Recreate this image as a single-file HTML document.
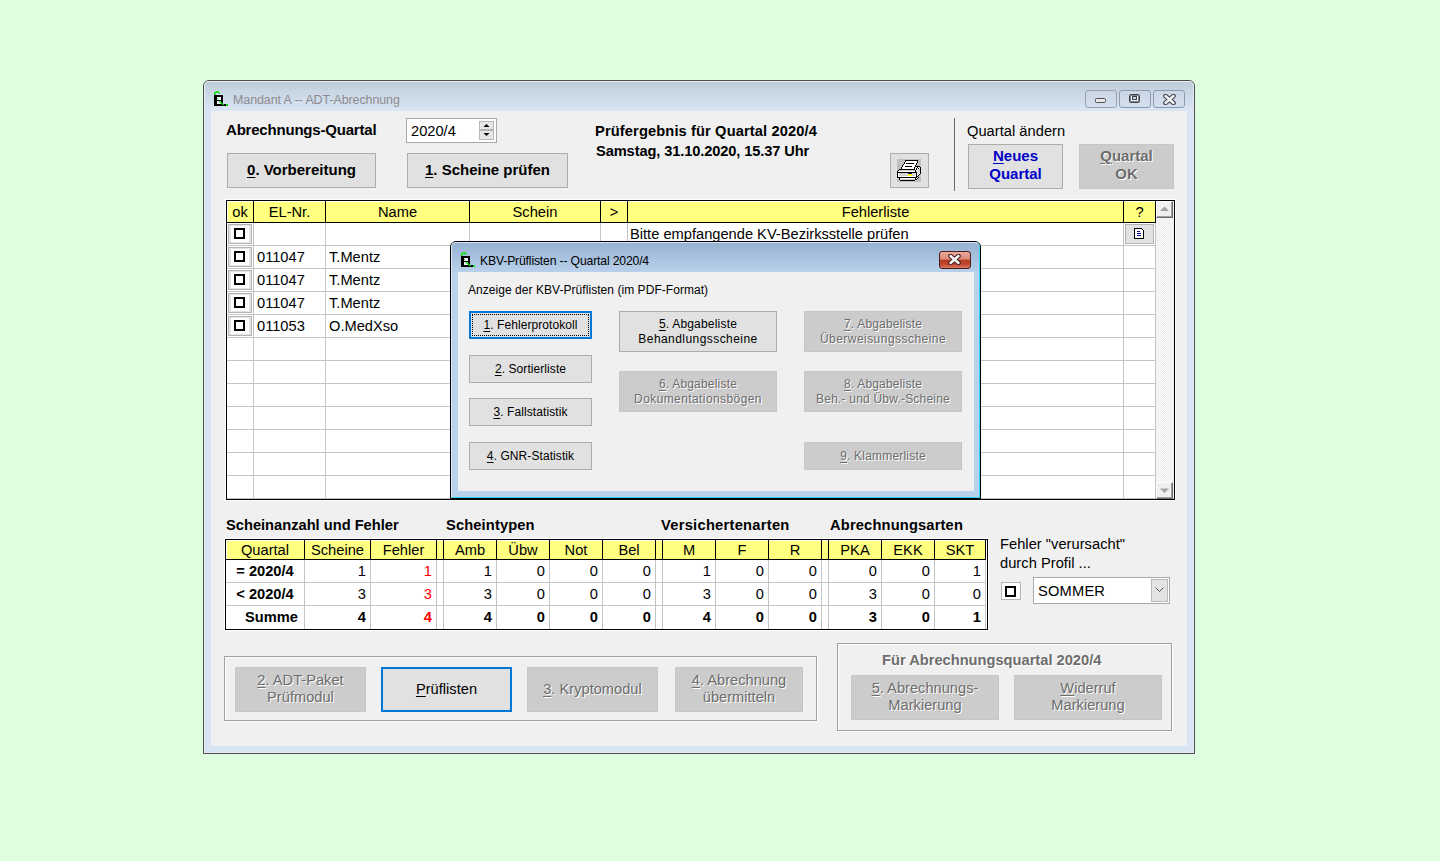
<!DOCTYPE html>
<html><head><meta charset="utf-8"><style>
*{box-sizing:border-box;margin:0;padding:0}
html,body{width:1440px;height:861px;overflow:hidden;background:#e0ffe0;font-family:"Liberation Sans",sans-serif;color:#000}
.a{position:absolute}
.t{position:absolute;white-space:nowrap;font-size:14.67px;line-height:17px}
.b{font-weight:bold}
.btn{position:absolute;background:#e1e1e1;border:1px solid #adadad;display:flex;align-items:center;justify-content:center;text-align:center;white-space:nowrap;font-size:14.67px;line-height:17px}
.dis{background:#cccccc;border-color:#c6c6c6;color:#6d6d6d;text-shadow:1px 1px 0 #fff}
.foc{border:2px solid #0078d7}
u{text-decoration:underline;text-underline-offset:2px;text-decoration-thickness:1px}
.tb{position:absolute;top:90px;width:32px;height:18px;border:1px solid #8c9bb3;border-radius:3px;background:linear-gradient(#cbd7e4,#d3dfec)}
.cb{position:absolute;width:24px;height:20px;border:1px solid #b4b4b4;background:#e3e3e3}
.cb i{position:absolute;left:2px;top:1px;width:18px;height:16px;background:#fff}
.cb b{position:absolute;left:5px;top:3px;width:11px;height:11px;border:2px solid #000}
.d{font-size:12px;line-height:15px;letter-spacing:0.2px}
.gy{background:#ffff80}
</style></head><body>
<div class="a" style="left:203px;top:80px;width:992px;height:674px;border:1px solid #4d4d4d;border-radius:6px 6px 0 0;background:#d7e4f2"></div>
<div class="a" style="left:204px;top:81px;width:990px;height:672px;border:1px solid #e6edf5;border-radius:5px 5px 0 0"></div>
<div class="a" style="left:205px;top:82px;width:988px;height:29px;border-radius:4px 4px 0 0;background:linear-gradient(#bfcddb,#dae6f3)"></div>
<div class="a" style="left:211px;top:111px;width:976px;height:635px;background:#f0f0f0;"></div>
<svg class="a" style="left:214px;top:91px" width="15" height="16" viewBox="0 0 15 16" shape-rendering="crispEdges">
  <rect x="0" y="4" width="9" height="11" fill="#000"/>
  <rect x="3" y="6" width="4" height="3" fill="#eef2f8"/>
  <rect x="3" y="10" width="4" height="3" fill="#eef2f8"/>
  <rect x="0" y="13" width="14" height="2" fill="#000"/>
  <path d="M0.8 4 V2.2 Q2 0.5 4 1 L5.5 2.5" stroke="#10e010" stroke-width="1.6" fill="none" shape-rendering="auto"/>
  <rect x="3" y="7" width="1" height="1" fill="#10e010"/>
  <path d="M5 10 L9.5 14" stroke="#10e010" stroke-width="1.3" shape-rendering="auto"/>
  <rect x="12" y="13" width="2" height="2" fill="#10e010"/>
</svg>
<div class="t " style="left:233px;top:93px;font-size:12.45px;letter-spacing:-0.07px;line-height:15px;color:#8d8a8f">Mandant A -- ADT-Abrechnung</div>
<div class="tb" style="left:1085px;border-color:#9aa1aa"><div class="a" style="left:9px;top:7px;width:11px;height:5px;border:1px solid #505050;border-radius:1.5px;background:#e8e8e8"></div></div>
<div class="tb" style="left:1119px"><div class="a" style="left:9px;top:3px;width:11px;height:9px;border:1px solid #3f4450;border-radius:1.5px;background:#f4f4f4;box-shadow:inset 0 0 0 1px #7d828c"></div><div class="a" style="left:12px;top:5px;width:5px;height:4px;border:1px solid #3f4450;background:#c9d3e0"></div></div>
<div class="tb" style="left:1153px"><svg class="a" style="left:9px;top:3px" width="13" height="11" viewBox="0 0 13 11"><path d="M2.5 2 L10.5 9 M10.5 2 L2.5 9" stroke="#3e4350" stroke-width="4.6" stroke-linecap="round"/><path d="M2.5 2 L10.5 9 M10.5 2 L2.5 9" stroke="#f4f4f4" stroke-width="2.4" stroke-linecap="round"/></svg></div>
<div class="t b" style="left:226px;top:121px;font-size:15px;letter-spacing:-0.2px">Abrechnungs-Quartal</div>
<div class="a" style="left:406px;top:118px;width:91px;height:25px;border:1px solid #a9a9a9;background:#fff"></div>
<div class="t " style="left:411px;top:123px;">2020/4</div>
<div class="a" style="left:479px;top:121px;width:15px;height:19px;border:1px solid #b9b9b9;background:#e6e6e6"></div>
<div class="a" style="left:479px;top:129px;width:15px;height:2px;background:#b4b4b4;"></div>
<svg class="a" style="left:482px;top:122px" width="10" height="16"><path d="M1.5 5 L4.5 2 L7.5 5Z" fill="#000"/><path d="M1.5 11 L4.5 14 L7.5 11Z" fill="#000"/></svg>
<div class="btn b" style="left:227px;top:153px;width:149px;height:35px;font-size:15px;letter-spacing:0px;padding-bottom:2px"><span><u>0</u>. Vorbereitung</span></div>
<div class="btn b" style="left:407px;top:153px;width:161px;height:35px;font-size:15px;letter-spacing:0px;padding-bottom:2px"><span><u>1</u>. Scheine prüfen</span></div>
<div class="t b" style="left:595px;top:123px;letter-spacing:0.12px">Prüfergebnis für Quartal 2020/4</div>
<div class="t b" style="left:596px;top:143px;letter-spacing:-0.12px">Samstag, 31.10.2020, 15.37 Uhr</div>
<div class="btn " style="left:890px;top:153px;width:39px;height:35px;"><span></span></div>
<svg class="a" style="left:897px;top:159px" width="24" height="23" viewBox="0 0 24 23" shape-rendering="crispEdges"><rect width="24" height="23" fill="#c0c0c0"/><rect x="8" y="1" width="13" height="1" fill="#000"/><rect x="8" y="2" width="1" height="1" fill="#000"/><rect x="9" y="2" width="11" height="1" fill="#fff"/><rect x="20" y="2" width="1" height="1" fill="#000"/><rect x="7" y="3" width="1" height="1" fill="#000"/><rect x="8" y="3" width="12" height="1" fill="#fff"/><rect x="20" y="3" width="1" height="1" fill="#000"/><rect x="7" y="4" width="1" height="1" fill="#000"/><rect x="8" y="4" width="1" height="1" fill="#fff"/><rect x="9" y="4" width="8" height="1" fill="#000"/><rect x="17" y="4" width="2" height="1" fill="#fff"/><rect x="19" y="4" width="1" height="1" fill="#000"/><rect x="6" y="5" width="1" height="1" fill="#000"/><rect x="7" y="5" width="12" height="1" fill="#fff"/><rect x="19" y="5" width="1" height="1" fill="#000"/><rect x="5" y="6" width="1" height="1" fill="#000"/><rect x="6" y="6" width="12" height="1" fill="#fff"/><rect x="18" y="6" width="1" height="1" fill="#000"/><rect x="5" y="7" width="1" height="1" fill="#000"/><rect x="6" y="7" width="2" height="1" fill="#fff"/><rect x="8" y="7" width="7" height="1" fill="#000"/><rect x="15" y="7" width="3" height="1" fill="#fff"/><rect x="18" y="7" width="5" height="1" fill="#000"/><rect x="4" y="8" width="1" height="1" fill="#000"/><rect x="5" y="8" width="12" height="1" fill="#fff"/><rect x="17" y="8" width="1" height="1" fill="#000"/><rect x="18" y="8" width="1" height="1" fill="#d4d4d4"/><rect x="19" y="8" width="1" height="1" fill="#fff"/><rect x="20" y="8" width="1" height="1" fill="#000"/><rect x="21" y="8" width="1" height="1" fill="#fff"/><rect x="22" y="8" width="1" height="1" fill="#d4d4d4"/><rect x="23" y="8" width="1" height="1" fill="#000"/><rect x="4" y="9" width="1" height="1" fill="#000"/><rect x="5" y="9" width="12" height="1" fill="#fff"/><rect x="17" y="9" width="1" height="1" fill="#000"/><rect x="18" y="9" width="1" height="1" fill="#fff"/><rect x="19" y="9" width="1" height="1" fill="#000"/><rect x="20" y="9" width="1" height="1" fill="#fff"/><rect x="21" y="9" width="1" height="1" fill="#000"/><rect x="22" y="9" width="1" height="1" fill="#fff"/><rect x="23" y="9" width="1" height="1" fill="#000"/><rect x="2" y="10" width="16" height="1" fill="#000"/><rect x="18" y="10" width="1" height="1" fill="#fff"/><rect x="19" y="10" width="1" height="1" fill="#000"/><rect x="20" y="10" width="1" height="1" fill="#fff"/><rect x="21" y="10" width="2" height="1" fill="#d4d4d4"/><rect x="23" y="10" width="1" height="1" fill="#000"/><rect x="1" y="11" width="1" height="1" fill="#000"/><rect x="2" y="11" width="16" height="1" fill="#d4d4d4"/><rect x="18" y="11" width="1" height="1" fill="#000"/><rect x="19" y="11" width="1" height="1" fill="#fff"/><rect x="20" y="11" width="3" height="1" fill="#d4d4d4"/><rect x="23" y="11" width="1" height="1" fill="#000"/><rect x="0" y="12" width="1" height="1" fill="#000"/><rect x="1" y="12" width="1" height="1" fill="#d4d4d4"/><rect x="2" y="12" width="16" height="1" fill="#fff"/><rect x="18" y="12" width="1" height="1" fill="#000"/><rect x="19" y="12" width="1" height="1" fill="#d4d4d4"/><rect x="20" y="12" width="1" height="1" fill="#fff"/><rect x="21" y="12" width="2" height="1" fill="#d4d4d4"/><rect x="23" y="12" width="1" height="1" fill="#000"/><rect x="0" y="13" width="20" height="1" fill="#000"/><rect x="20" y="13" width="1" height="1" fill="#d4d4d4"/><rect x="21" y="13" width="1" height="1" fill="#fff"/><rect x="22" y="13" width="1" height="1" fill="#d4d4d4"/><rect x="23" y="13" width="1" height="1" fill="#000"/><rect x="0" y="14" width="1" height="1" fill="#000"/><rect x="1" y="14" width="1" height="1" fill="#fff"/><rect x="2" y="14" width="9" height="1" fill="#d4d4d4"/><rect x="11" y="14" width="4" height="1" fill="#000080"/><rect x="15" y="14" width="3" height="1" fill="#d4d4d4"/><rect x="18" y="14" width="1" height="1" fill="#fff"/><rect x="19" y="14" width="1" height="1" fill="#000"/><rect x="20" y="14" width="1" height="1" fill="#fff"/><rect x="21" y="14" width="1" height="1" fill="#d4d4d4"/><rect x="22" y="14" width="1" height="1" fill="#fff"/><rect x="23" y="14" width="1" height="1" fill="#000"/><rect x="0" y="15" width="1" height="1" fill="#000"/><rect x="1" y="15" width="1" height="1" fill="#fff"/><rect x="2" y="15" width="9" height="1" fill="#d4d4d4"/><rect x="11" y="15" width="4" height="1" fill="#ffff00"/><rect x="15" y="15" width="3" height="1" fill="#d4d4d4"/><rect x="18" y="15" width="1" height="1" fill="#fff"/><rect x="19" y="15" width="1" height="1" fill="#000"/><rect x="20" y="15" width="1" height="1" fill="#d4d4d4"/><rect x="21" y="15" width="1" height="1" fill="#fff"/><rect x="22" y="15" width="1" height="1" fill="#000"/><rect x="0" y="16" width="1" height="1" fill="#000"/><rect x="1" y="16" width="1" height="1" fill="#fff"/><rect x="2" y="16" width="9" height="1" fill="#d4d4d4"/><rect x="11" y="16" width="4" height="1" fill="#ffff00"/><rect x="15" y="16" width="3" height="1" fill="#d4d4d4"/><rect x="18" y="16" width="1" height="1" fill="#fff"/><rect x="19" y="16" width="1" height="1" fill="#000"/><rect x="20" y="16" width="1" height="1" fill="#fff"/><rect x="21" y="16" width="1" height="1" fill="#000"/><rect x="0" y="17" width="1" height="1" fill="#000"/><rect x="1" y="17" width="18" height="1" fill="#fff"/><rect x="19" y="17" width="2" height="1" fill="#000"/><rect x="0" y="18" width="20" height="1" fill="#000"/><rect x="20" y="18" width="1" height="1" fill="#fff"/><rect x="21" y="18" width="1" height="1" fill="#000"/><rect x="2" y="19" width="1" height="1" fill="#000"/><rect x="3" y="19" width="15" height="1" fill="#fff"/><rect x="18" y="19" width="1" height="1" fill="#000"/><rect x="19" y="19" width="1" height="1" fill="#fff"/><rect x="20" y="19" width="1" height="1" fill="#000"/><rect x="2" y="20" width="1" height="1" fill="#000"/><rect x="3" y="20" width="15" height="1" fill="#d4d4d4"/><rect x="18" y="20" width="2" height="1" fill="#000"/><rect x="3" y="21" width="15" height="1" fill="#000"/><rect x="18" y="21" width="1" height="1" fill="#fff"/></svg>
<div class="a" style="left:954px;top:118px;width:1px;height:73px;background:#6b6b6b;"></div>
<div class="t " style="left:967px;top:123px;letter-spacing:0.03px">Quartal ändern</div>
<div class="btn b" style="left:968px;top:144px;width:95px;height:45px;color:#0000c8;line-height:18px;padding-bottom:4px;font-size:15px"><span><u>N</u>eues<br>Quartal</span></div>
<div class="btn b dis" style="left:1079px;top:144px;width:95px;height:45px;line-height:18px;padding-bottom:4px;font-size:15px"><span><u>Q</u>uartal<br>OK</span></div>
<div class="a" style="left:225px;top:199px;width:951px;height:302px;border:1px solid #fff"></div>
<div class="a" style="left:226px;top:200px;width:949px;height:300px;border:1px solid #000;background:#fff"></div>
<div class="a" style="left:227px;top:201px;width:928px;height:21px;background:#fff;"></div>
<div class="a" style="left:228px;top:202px;width:927px;height:20px;background:#ffff80;"></div>
<div class="a" style="left:227px;top:222px;width:929px;height:1px;background:#000;"></div>
<div class="a" style="left:253px;top:201px;width:1px;height:22px;background:#000;"></div>
<div class="a" style="left:253px;top:223px;width:1px;height:276px;background:#c4c4c4;"></div>
<div class="a" style="left:325px;top:201px;width:1px;height:22px;background:#000;"></div>
<div class="a" style="left:325px;top:223px;width:1px;height:276px;background:#c4c4c4;"></div>
<div class="a" style="left:469px;top:201px;width:1px;height:22px;background:#000;"></div>
<div class="a" style="left:469px;top:223px;width:1px;height:276px;background:#c4c4c4;"></div>
<div class="a" style="left:600px;top:201px;width:1px;height:22px;background:#000;"></div>
<div class="a" style="left:600px;top:223px;width:1px;height:276px;background:#c4c4c4;"></div>
<div class="a" style="left:627px;top:201px;width:1px;height:22px;background:#000;"></div>
<div class="a" style="left:627px;top:223px;width:1px;height:276px;background:#c4c4c4;"></div>
<div class="a" style="left:1123px;top:201px;width:1px;height:22px;background:#000;"></div>
<div class="a" style="left:1123px;top:223px;width:1px;height:276px;background:#c4c4c4;"></div>
<div class="a" style="left:1155px;top:201px;width:1px;height:22px;background:#000;"></div>
<div class="a" style="left:1155px;top:223px;width:1px;height:276px;background:#c4c4c4;"></div>
<div class="a" style="left:227px;top:245px;width:928px;height:1px;background:#c4c4c4;"></div>
<div class="a" style="left:227px;top:268px;width:928px;height:1px;background:#c4c4c4;"></div>
<div class="a" style="left:227px;top:291px;width:928px;height:1px;background:#c4c4c4;"></div>
<div class="a" style="left:227px;top:314px;width:928px;height:1px;background:#c4c4c4;"></div>
<div class="a" style="left:227px;top:337px;width:928px;height:1px;background:#c4c4c4;"></div>
<div class="a" style="left:227px;top:360px;width:928px;height:1px;background:#c4c4c4;"></div>
<div class="a" style="left:227px;top:383px;width:928px;height:1px;background:#c4c4c4;"></div>
<div class="a" style="left:227px;top:406px;width:928px;height:1px;background:#c4c4c4;"></div>
<div class="a" style="left:227px;top:429px;width:928px;height:1px;background:#c4c4c4;"></div>
<div class="a" style="left:227px;top:452px;width:928px;height:1px;background:#c4c4c4;"></div>
<div class="a" style="left:227px;top:475px;width:928px;height:1px;background:#c4c4c4;"></div>
<div class="a" style="left:227px;top:498px;width:928px;height:1px;background:#c4c4c4;"></div>
<div class="t " style="left:227px;width:26px;top:204px;text-align:center;">ok</div>
<div class="t " style="left:254px;width:71px;top:204px;text-align:center;">EL-Nr.</div>
<div class="t " style="left:326px;width:143px;top:204px;text-align:center;">Name</div>
<div class="t " style="left:470px;width:130px;top:204px;text-align:center;">Schein</div>
<div class="t " style="left:601px;width:26px;top:204px;text-align:center;">&gt;</div>
<div class="t " style="left:628px;width:495px;top:204px;text-align:center;">Fehlerliste</div>
<div class="t " style="left:1124px;width:31px;top:204px;text-align:center;">?</div>
<div class="cb" style="left:228px;top:224px"><i></i><b></b></div>
<div class="cb" style="left:228px;top:247px"><i></i><b></b></div>
<div class="cb" style="left:228px;top:270px"><i></i><b></b></div>
<div class="cb" style="left:228px;top:293px"><i></i><b></b></div>
<div class="cb" style="left:228px;top:316px"><i></i><b></b></div>
<div class="t " style="left:630px;top:226px;letter-spacing:0px">Bitte empfangende KV-Bezirksstelle prüfen</div>
<div class="t " style="left:257px;top:249px;">011047</div>
<div class="t " style="left:329px;top:249px;">T.Mentz</div>
<div class="t " style="left:257px;top:272px;">011047</div>
<div class="t " style="left:329px;top:272px;">T.Mentz</div>
<div class="t " style="left:257px;top:295px;">011047</div>
<div class="t " style="left:329px;top:295px;">T.Mentz</div>
<div class="t " style="left:257px;top:318px;">011053</div>
<div class="t " style="left:329px;top:318px;">O.MedXso</div>
<div class="a" style="left:1125px;top:224px;width:29px;height:20px;border:1px solid #b4b4b4;background:#e1e1e1"></div>
<svg class="a" style="left:1134px;top:228px" width="10" height="11" viewBox="0 0 10 11" shape-rendering="crispEdges">
<path d="M0.5 0.5 H7.5 L9.5 2.5 V10.5 H0.5 Z" fill="#fff" stroke="#000" stroke-width="1"/>
<rect x="3" y="3" width="3" height="1" fill="#000090"/><rect x="3" y="5" width="4" height="1" fill="#000090"/><rect x="3" y="7" width="4" height="1" fill="#000090"/>
</svg>
<div class="a" style="left:1156px;top:201px;width:18px;height:298px;background:repeating-conic-gradient(#fbfbfb 0 25%,#ececec 0 50%) 0 0/2px 2px"></div>
<div class="a" style="left:1156px;top:201px;width:17px;height:17px;background:#f0f0f0;border-top:1px solid #fff;border-left:1px solid #fff;border-right:1px solid #6d6d6d;border-bottom:1px solid #6d6d6d;box-shadow:inset -1px -1px 0 #a0a0a0"></div>
<div class="a" style="left:1156px;top:482px;width:17px;height:17px;background:#f0f0f0;border-top:1px solid #fff;border-left:1px solid #fff;border-right:1px solid #6d6d6d;border-bottom:1px solid #6d6d6d;box-shadow:inset -1px -1px 0 #a0a0a0"></div>
<svg class="a" style="left:1160px;top:206px" width="9" height="6"><path d="M0 5 L4.5 0.5 L9 5Z" fill="#a3a3a3"/></svg>
<svg class="a" style="left:1160px;top:488px" width="9" height="6"><path d="M0 0.5 L4.5 5 L9 0.5Z" fill="#a3a3a3"/></svg>
<div class="a" style="left:450px;top:241px;width:531px;height:258px;border:1px solid #000;border-radius:6px 6px 0 0;background:#b9d1ea"></div>
<div class="a" style="left:451px;top:242px;width:529px;height:256px;border:1px solid #dbe8f5;border-right-color:#2fd8f8;border-bottom-color:#2fd8f8;border-radius:5px 5px 0 0"></div>
<div class="a" style="left:452px;top:243px;width:527px;height:29px;border-radius:4px 4px 0 0;background:linear-gradient(#97b2d2,#b8d0ea)"></div>
<div class="a" style="left:458px;top:272px;width:516px;height:219px;background:#f0f0f0;"></div>
<svg class="a" style="left:461px;top:252px" width="15" height="16" viewBox="0 0 15 16" shape-rendering="crispEdges">
  <rect x="0" y="4" width="9" height="11" fill="#000"/>
  <rect x="3" y="6" width="4" height="3" fill="#eef2f8"/>
  <rect x="3" y="10" width="4" height="3" fill="#eef2f8"/>
  <rect x="0" y="13" width="14" height="2" fill="#000"/>
  <path d="M0.8 4 V2.2 Q2 0.5 4 1 L5.5 2.5" stroke="#10e010" stroke-width="1.6" fill="none" shape-rendering="auto"/>
  <rect x="3" y="7" width="1" height="1" fill="#10e010"/>
  <path d="M5 10 L9.5 14" stroke="#10e010" stroke-width="1.3" shape-rendering="auto"/>
  <rect x="12" y="13" width="2" height="2" fill="#10e010"/>
</svg>
<div class="t " style="left:480px;top:254px;font-size:12.2px;line-height:15px;letter-spacing:-0.16px">KBV-Prüflisten -- Quartal 2020/4</div>
<div class="a" style="left:939px;top:251px;width:32px;height:18px;border:1px solid #4a1d1d;border-radius:3px;background:linear-gradient(#e9a99b 0%,#d98b7a 45%,#b83a22 50%,#c0452c 75%,#d77b64 100%)"></div>
<svg class="a" style="left:948px;top:254px" width="13" height="11" viewBox="0 0 13 11"><path d="M2.5 2 L10.5 9 M10.5 2 L2.5 9" stroke="#4b2020" stroke-width="4.6" stroke-linecap="round"/><path d="M2.5 2 L10.5 9 M10.5 2 L2.5 9" stroke="#f6f6f6" stroke-width="2.4" stroke-linecap="round"/></svg>
<div class="t " style="left:468px;top:283px;font-size:12px;line-height:15px;letter-spacing:0.05px">Anzeige der KBV-Prüflisten (im PDF-Format)</div>
<div class="btn d" style="left:469px;top:311px;width:123px;height:28px;border:2px solid #0078d7;letter-spacing:0.08px"><span><u>1</u>. Fehlerprotokoll</span></div>
<div class="a" style="left:472px;top:314px;width:117px;height:22px;border:1px dotted #000"></div>
<div class="btn d" style="left:469px;top:355px;width:123px;height:28px;letter-spacing:0.08px"><span><u>2</u>. Sortierliste</span></div>
<div class="btn d" style="left:469px;top:398px;width:123px;height:28px;letter-spacing:0.08px"><span><u>3</u>. Fallstatistik</span></div>
<div class="btn d" style="left:469px;top:442px;width:123px;height:28px;letter-spacing:0.08px"><span><u>4</u>. GNR-Statistik</span></div>
<div class="btn d" style="left:619px;top:311px;width:158px;height:41px;"><span><u>5</u>. Abgabeliste<br><span style="letter-spacing:0.44px">Behandlungsscheine</span></span></div>
<div class="btn d dis" style="left:619px;top:371px;width:158px;height:41px;"><span><u>6</u>. Abgabeliste<br><span style="letter-spacing:0.41px">Dokumentationsbögen</span></span></div>
<div class="btn d dis" style="left:804px;top:311px;width:158px;height:41px;"><span><u>7</u>. Abgabeliste<br><span style="letter-spacing:0.46px">Überweisungsscheine</span></span></div>
<div class="btn d dis" style="left:804px;top:371px;width:158px;height:41px;"><span><u>8</u>. Abgabeliste<br>Beh.- und Übw.-Scheine</span></div>
<div class="btn d dis" style="left:804px;top:442px;width:158px;height:28px;"><span><u>9</u>. Klammerliste</span></div>
<div class="t b" style="left:226px;top:517px;">Scheinanzahl und Fehler</div>
<div class="t b" style="left:446px;top:517px;letter-spacing:0.14px">Scheintypen</div>
<div class="t b" style="left:661px;top:517px;letter-spacing:0.28px">Versichertenarten</div>
<div class="t b" style="left:830px;top:517px;letter-spacing:0.17px">Abrechnungsarten</div>
<div class="a" style="left:224px;top:538px;width:765px;height:93px;border:1px solid #fff"></div>
<div class="a" style="left:225px;top:539px;width:763px;height:91px;border:1px solid #000;background:#fff"></div>
<div class="a" style="left:227px;top:541px;width:758px;height:18px;background:#ffff80;"></div>
<div class="a" style="left:226px;top:559px;width:760px;height:1px;background:#000;"></div>
<div class="a" style="left:985px;top:540px;width:1px;height:20px;background:#000;"></div>
<div class="a" style="left:304px;top:540px;width:1px;height:20px;background:#000;"></div>
<div class="a" style="left:304px;top:560px;width:1px;height:69px;background:#c4c4c4;"></div>
<div class="a" style="left:370px;top:540px;width:1px;height:20px;background:#000;"></div>
<div class="a" style="left:370px;top:560px;width:1px;height:69px;background:#c4c4c4;"></div>
<div class="a" style="left:436px;top:540px;width:1px;height:20px;background:#000;"></div>
<div class="a" style="left:436px;top:560px;width:1px;height:69px;background:#c4c4c4;"></div>
<div class="a" style="left:443px;top:540px;width:1px;height:20px;background:#000;"></div>
<div class="a" style="left:443px;top:560px;width:1px;height:69px;background:#c4c4c4;"></div>
<div class="a" style="left:496px;top:540px;width:1px;height:20px;background:#000;"></div>
<div class="a" style="left:496px;top:560px;width:1px;height:69px;background:#c4c4c4;"></div>
<div class="a" style="left:549px;top:540px;width:1px;height:20px;background:#000;"></div>
<div class="a" style="left:549px;top:560px;width:1px;height:69px;background:#c4c4c4;"></div>
<div class="a" style="left:602px;top:540px;width:1px;height:20px;background:#000;"></div>
<div class="a" style="left:602px;top:560px;width:1px;height:69px;background:#c4c4c4;"></div>
<div class="a" style="left:655px;top:540px;width:1px;height:20px;background:#000;"></div>
<div class="a" style="left:655px;top:560px;width:1px;height:69px;background:#c4c4c4;"></div>
<div class="a" style="left:662px;top:540px;width:1px;height:20px;background:#000;"></div>
<div class="a" style="left:662px;top:560px;width:1px;height:69px;background:#c4c4c4;"></div>
<div class="a" style="left:715px;top:540px;width:1px;height:20px;background:#000;"></div>
<div class="a" style="left:715px;top:560px;width:1px;height:69px;background:#c4c4c4;"></div>
<div class="a" style="left:768px;top:540px;width:1px;height:20px;background:#000;"></div>
<div class="a" style="left:768px;top:560px;width:1px;height:69px;background:#c4c4c4;"></div>
<div class="a" style="left:821px;top:540px;width:1px;height:20px;background:#000;"></div>
<div class="a" style="left:821px;top:560px;width:1px;height:69px;background:#c4c4c4;"></div>
<div class="a" style="left:828px;top:540px;width:1px;height:20px;background:#000;"></div>
<div class="a" style="left:828px;top:560px;width:1px;height:69px;background:#c4c4c4;"></div>
<div class="a" style="left:881px;top:540px;width:1px;height:20px;background:#000;"></div>
<div class="a" style="left:881px;top:560px;width:1px;height:69px;background:#c4c4c4;"></div>
<div class="a" style="left:934px;top:540px;width:1px;height:20px;background:#000;"></div>
<div class="a" style="left:934px;top:560px;width:1px;height:69px;background:#c4c4c4;"></div>
<div class="a" style="left:985px;top:560px;width:1px;height:69px;background:#c4c4c4;"></div>
<div class="a" style="left:226px;top:582px;width:760px;height:1px;background:#c4c4c4;"></div>
<div class="a" style="left:226px;top:605px;width:760px;height:1px;background:#c4c4c4;"></div>
<div class="t " style="left:226px;width:78px;top:542px;text-align:center;">Quartal</div>
<div class="t " style="left:305px;width:65px;top:542px;text-align:center;">Scheine</div>
<div class="t " style="left:371px;width:65px;top:542px;text-align:center;">Fehler</div>
<div class="t " style="left:444px;width:52px;top:542px;text-align:center;">Amb</div>
<div class="t " style="left:497px;width:52px;top:542px;text-align:center;">Übw</div>
<div class="t " style="left:550px;width:52px;top:542px;text-align:center;">Not</div>
<div class="t " style="left:603px;width:52px;top:542px;text-align:center;">Bel</div>
<div class="t " style="left:663px;width:52px;top:542px;text-align:center;">M</div>
<div class="t " style="left:716px;width:52px;top:542px;text-align:center;">F</div>
<div class="t " style="left:769px;width:52px;top:542px;text-align:center;">R</div>
<div class="t " style="left:829px;width:52px;top:542px;text-align:center;">PKA</div>
<div class="t " style="left:882px;width:52px;top:542px;text-align:center;">EKK</div>
<div class="t " style="left:935px;width:50px;top:542px;text-align:center;">SKT</div>
<div class="t b" style="left:226px;width:78px;top:563px;text-align:center;">= 2020/4</div>
<div class="t " style="right:1074px;top:563px;text-align:right;">1</div>
<div class="t " style="right:1008px;top:563px;text-align:right;color:#ff0000;">1</div>
<div class="t " style="right:948px;top:563px;text-align:right;">1</div>
<div class="t " style="right:895px;top:563px;text-align:right;">0</div>
<div class="t " style="right:842px;top:563px;text-align:right;">0</div>
<div class="t " style="right:789px;top:563px;text-align:right;">0</div>
<div class="t " style="right:729px;top:563px;text-align:right;">1</div>
<div class="t " style="right:676px;top:563px;text-align:right;">0</div>
<div class="t " style="right:623px;top:563px;text-align:right;">0</div>
<div class="t " style="right:563px;top:563px;text-align:right;">0</div>
<div class="t " style="right:510px;top:563px;text-align:right;">0</div>
<div class="t " style="right:459px;top:563px;text-align:right;">1</div>
<div class="t b" style="left:226px;width:78px;top:586px;text-align:center;">&lt; 2020/4</div>
<div class="t " style="right:1074px;top:586px;text-align:right;">3</div>
<div class="t " style="right:1008px;top:586px;text-align:right;color:#ff0000;">3</div>
<div class="t " style="right:948px;top:586px;text-align:right;">3</div>
<div class="t " style="right:895px;top:586px;text-align:right;">0</div>
<div class="t " style="right:842px;top:586px;text-align:right;">0</div>
<div class="t " style="right:789px;top:586px;text-align:right;">0</div>
<div class="t " style="right:729px;top:586px;text-align:right;">3</div>
<div class="t " style="right:676px;top:586px;text-align:right;">0</div>
<div class="t " style="right:623px;top:586px;text-align:right;">0</div>
<div class="t " style="right:563px;top:586px;text-align:right;">3</div>
<div class="t " style="right:510px;top:586px;text-align:right;">0</div>
<div class="t " style="right:459px;top:586px;text-align:right;">0</div>
<div class="t b" style="left:245px;top:609px;">Summe</div>
<div class="t b" style="right:1074px;top:609px;text-align:right;">4</div>
<div class="t b" style="right:1008px;top:609px;text-align:right;color:#ff0000;">4</div>
<div class="t b" style="right:948px;top:609px;text-align:right;">4</div>
<div class="t b" style="right:895px;top:609px;text-align:right;">0</div>
<div class="t b" style="right:842px;top:609px;text-align:right;">0</div>
<div class="t b" style="right:789px;top:609px;text-align:right;">0</div>
<div class="t b" style="right:729px;top:609px;text-align:right;">4</div>
<div class="t b" style="right:676px;top:609px;text-align:right;">0</div>
<div class="t b" style="right:623px;top:609px;text-align:right;">0</div>
<div class="t b" style="right:563px;top:609px;text-align:right;">3</div>
<div class="t b" style="right:510px;top:609px;text-align:right;">0</div>
<div class="t b" style="right:459px;top:609px;text-align:right;">1</div>
<div class="t " style="left:1000px;top:536px;letter-spacing:0.03px">Fehler "verursacht"</div>
<div class="t " style="left:1000px;top:555px;letter-spacing:0.03px">durch Profil ...</div>
<div class="cb" style="left:1001px;top:582px;width:20px;height:18px;background:#fff"><i style="left:2px;top:1px;width:14px;height:14px"></i><b style="left:3px;top:3px;width:11px;height:11px;border-width:2.5px"></b></div>
<div class="a" style="left:1033px;top:577px;width:137px;height:27px;border:1px solid #a9a9a9;background:#fff"></div>
<div class="t " style="left:1038px;top:583px;letter-spacing:0.2px">SOMMER</div>
<div class="a" style="left:1151px;top:579px;width:17px;height:23px;border:1px solid #b9b9b9;background:#e3e3e3"></div>
<svg class="a" style="left:1155px;top:587px" width="9" height="6"><path d="M0.5 0.5 L4.5 4.5 L8.5 0.5" stroke="#555" stroke-width="1" fill="none"/></svg>
<div class="a" style="left:224px;top:656px;width:593px;height:65px;border:1px solid #a0a0a0;box-shadow:inset 1px 1px 0 #fff,1px 1px 0 #fff"></div>
<div class="btn dis" style="left:235px;top:667px;width:131px;height:45px;padding-bottom:2px"><span><u>2</u>. ADT-Paket<br>Prüfmodul</span></div>
<div class="btn" style="left:381px;top:667px;width:131px;height:45px;border:2px solid #0078d7"><span><u>P</u>rüflisten</span></div>
<div class="btn dis" style="left:527px;top:667px;width:131px;height:45px;"><span><u>3</u>. Kryptomodul</span></div>
<div class="btn dis" style="left:675px;top:667px;width:128px;height:45px;padding-bottom:2px"><span><u>4</u>. Abrechnung<br>übermitteln</span></div>
<div class="a" style="left:837px;top:643px;width:335px;height:88px;border:1px solid #a0a0a0;box-shadow:inset 1px 1px 0 #fff,1px 1px 0 #fff"></div>
<div class="t b" style="left:882px;top:652px;color:#6d6d6d;text-shadow:1px 1px 0 #fff">Für Abrechnungsquartal 2020/4</div>
<div class="btn dis" style="left:851px;top:675px;width:148px;height:45px;padding-bottom:2px"><span><u>5</u>. Abrechnungs-<br>Markierung</span></div>
<div class="btn dis" style="left:1014px;top:675px;width:148px;height:45px;padding-bottom:2px"><span><u>W</u>iderruf<br>Markierung</span></div>
</body></html>
